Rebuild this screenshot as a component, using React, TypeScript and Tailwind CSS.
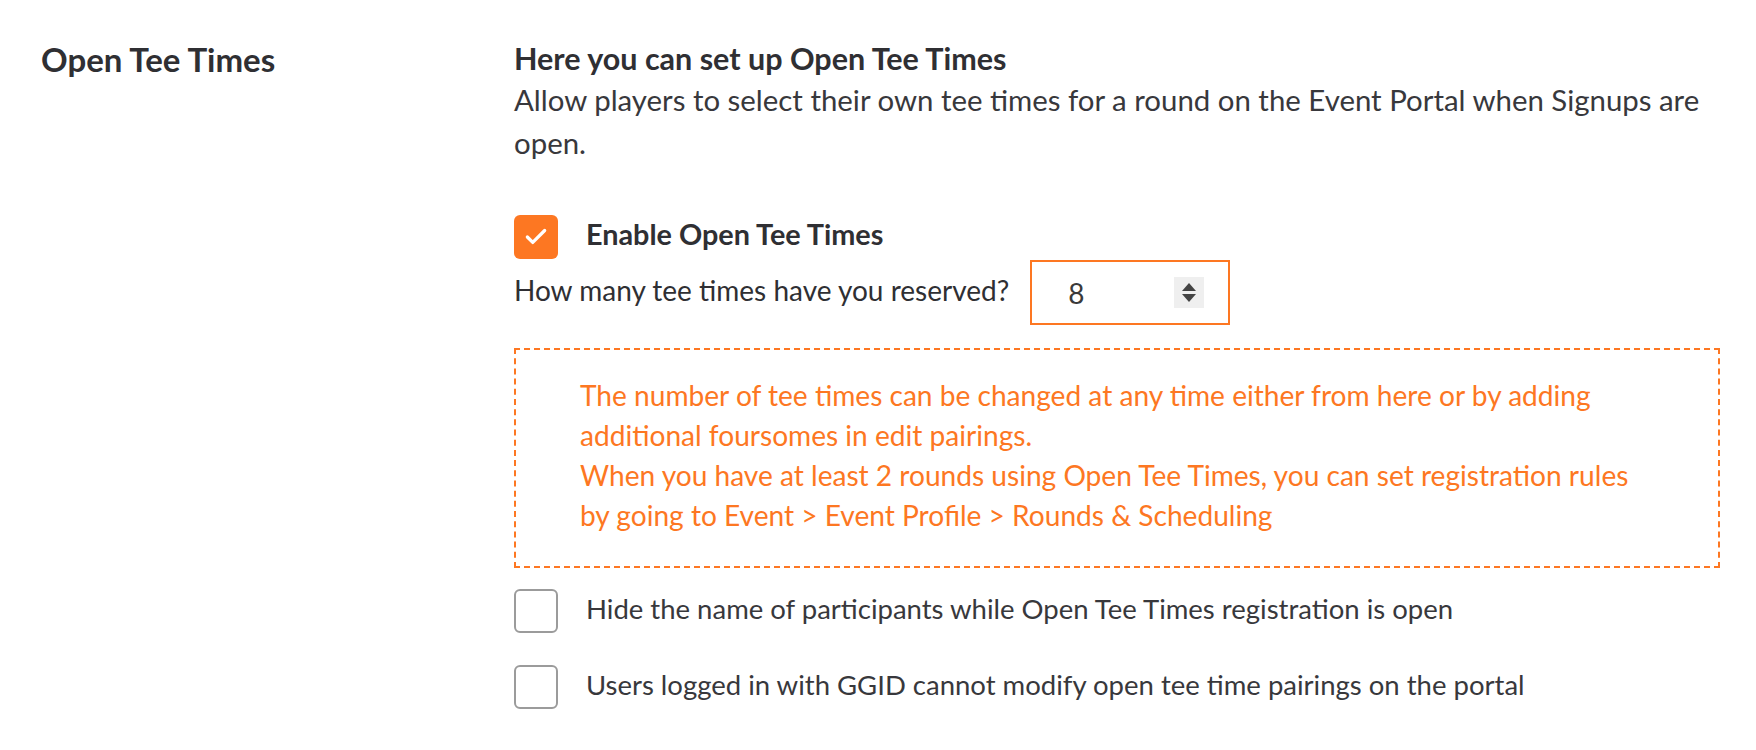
import { Check } from 'lucide-react';

const font = { fontFamily: 'Lato, "Open Sans", sans-serif' };

function Box({ checked }: { checked?: boolean }) {
  if (checked) {
    return (
      <span className="flex h-[44px] w-[44px] shrink-0 items-center justify-center rounded-[6px] bg-[#fd7722]">
        <Check className="h-[26px] w-[26px] text-white" strokeWidth={3} />
      </span>
    );
  }
  return <span className="block h-[44px] w-[44px] shrink-0 rounded-[6px] border-2 border-[#9b9b9b] bg-white" />;
}

export default function App() {
  return (
    <div className="min-h-screen bg-white text-[#2f2f33]" style={font}>
      <div className="flex pl-[41px] pr-[36px] pt-[40px]">
        <div className="w-[473px] shrink-0">
          <h2 className="text-[33px] font-bold leading-[38px]">Open Tee Times</h2>
        </div>
        <div className="flex-1">
          <h3 className="text-[30.5px] font-bold leading-[36px]">Here you can set up Open Tee Times</h3>
          <p className="mt-[2px] text-[29.4px] leading-[43px] text-[#38383c]">
            Allow players to select their own tee times for a round on the Event Portal when Signups are open.
          </p>

          <label className="mt-[51px] flex items-center gap-[28px]">
            <Box checked />
            <span className="-mt-[4px] text-[28.8px] font-bold">Enable Open Tee Times</span>
          </label>

          <div className="mt-[1px] flex items-center gap-[21px]">
            <span className="-mt-[6px] text-[28px]">How many tee times have you reserved?</span>
            <div className="flex h-[65px] w-[200px] items-center justify-between border-2 border-[#fd7722] pl-[36px] pr-[24px]">
              <span className="text-[28px] text-[#3a3a3a]">8</span>
              <span className="flex h-[31px] w-[30px] flex-col items-center justify-center gap-[3px] bg-[#efefef]">
                <span className="block h-0 w-0 border-x-[7px] border-b-[8px] border-x-transparent border-b-[#444]" />
                <span className="block h-0 w-0 border-x-[7px] border-t-[8px] border-x-transparent border-t-[#444]" />
              </span>
            </div>
          </div>

          <div className="mt-[23px] border-2 border-dashed border-[#fd7722] pb-[31px] pl-[64px] pr-[70px] pt-[25px] text-[28.1px] leading-[40px] text-[#fd7722]">
            <p>
              The number of tee times can be changed at any time either from here or by adding additional foursomes in edit pairings.
            </p>
            <p>
              When you have at least 2 rounds using Open Tee Times, you can set registration rules by going to Event &gt; Event Profile &gt; Rounds &amp; Scheduling
            </p>
          </div>

          <label className="mt-[21px] flex items-center gap-[28px]">
            <Box />
            <span className="-mt-[4px] text-[27.5px] text-[#38383c]">Hide the name of participants while Open Tee Times registration is open</span>
          </label>
          <label className="mt-[32px] flex items-center gap-[28px]">
            <Box />
            <span className="-mt-[4px] text-[27.5px] text-[#38383c]">Users logged in with GGID cannot modify open tee time pairings on the portal</span>
          </label>
        </div>
      </div>
    </div>
  );
}
